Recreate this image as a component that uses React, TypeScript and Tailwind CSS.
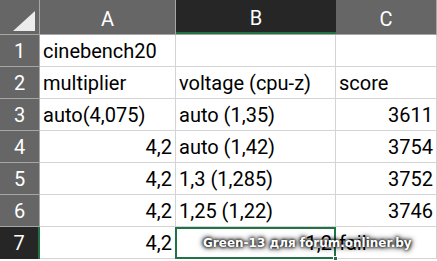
import React from "react"

const cols = [
  { label: "A", w: "w-[136px]" },
  { label: "B", w: "w-[160px]" },
  { label: "C", w: "w-[101px]" },
]

type Cell = { text: string; align?: "left" | "right" }

const rows: Cell[][] = [
  [{ text: "cinebench20" }, { text: "" }, { text: "" }],
  [{ text: "multiplier" }, { text: "voltage (cpu-z)" }, { text: "score" }],
  [{ text: "auto(4,075)" }, { text: "auto (1,35)" }, { text: "3611", align: "right" }],
  [{ text: "4,2", align: "right" }, { text: "auto (1,42)" }, { text: "3754", align: "right" }],
  [{ text: "4,2", align: "right" }, { text: "1,3 (1,285)" }, { text: "3752", align: "right" }],
  [{ text: "4,2", align: "right" }, { text: "1,25 (1,22)" }, { text: "3746", align: "right" }],
  [{ text: "4,2", align: "right" }, { text: "1,2", align: "right" }, { text: "fail" }],
]

export default function App() {
  return (
    <div
      className="relative w-[437px] h-[261px] overflow-hidden bg-white text-black"
      style={{ fontFamily: "Roboto, 'Noto Sans', sans-serif" }}
    >
      {/* column headers */}
      <div className="flex h-[35px] bg-[#666666] border-b border-[#a6a6a6]">
        <div className="w-[40px] shrink-0 border-r border-[#a6a6a6] flex items-end justify-end pr-[4px] pb-[3px]">
          <svg width="22" height="20" viewBox="0 0 22 20">
            <polygon points="22,0 22,20 0,20" fill="#ececec" />
          </svg>
        </div>
        {cols.map((c) => (
          <div
            key={c.label}
            className={`${c.w} shrink-0 flex items-center justify-center text-[20px] pt-[4px] text-white ${
              c.label === "B" ? "bg-[#262626] border-b-2 border-[#217346]" : "border-r border-[#a6a6a6]"
            }`}
          >
            {c.label}
          </div>
        ))}
      </div>

      {rows.map((r, i) => (
        <div key={i} className="flex h-[32px]">
          <div
            className={`w-[40px] shrink-0 flex items-center justify-center text-[20px] text-white ${
              i === 6 ? "bg-[#262626] border-r-2 border-[#217346]" : "bg-[#666666] border-r border-b border-[#a6a6a6]"
            }`}
          >
            {i + 1}
          </div>
          {r.map((cell, j) => (
            <div
              key={j}
              className={`${cols[j].w} shrink-0 flex items-center px-[3px] text-[20px] leading-none border-r border-b border-[#d4d4d4] whitespace-nowrap ${
                cell.align === "right" ? "justify-end" : "justify-start"
              }`}
            >
              {cell.text}
            </div>
          ))}
        </div>
      ))}

      {/* active cell B7 */}
      <div className="absolute left-[175px] top-[227px] w-[161px] h-[32px] border-2 border-[#217346]" />
      <div className="absolute left-[333px] top-[256px] w-[5px] h-[5px] bg-[#217346] border border-white" />

      {/* watermark */}
      <div
        className="absolute left-[203px] top-[234px] text-[12px] font-bold text-white whitespace-nowrap"
        style={{
          fontFamily: "'DejaVu Sans', sans-serif",
          textShadow: "0 0 3px #000, 0 0 5px #000, 0 0 6px rgba(0,0,0,0.8)",
        }}
      >
        Green-13 для forum.onliner.by
      </div>
    </div>
  )
}
